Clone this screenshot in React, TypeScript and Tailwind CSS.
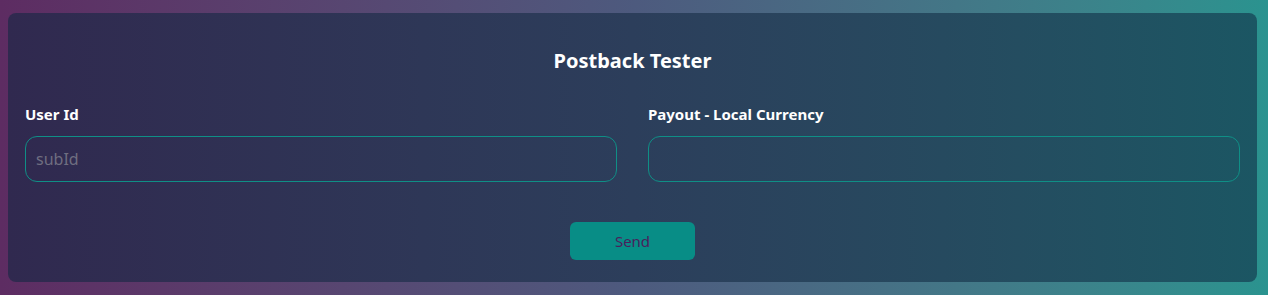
import React, { useState } from 'react';

export default function App() {
  const [userId, setUserId] = useState('');
  const [payout, setPayout] = useState('');

  return (
    <div
      className="min-h-[295px] w-full bg-gradient-to-r from-[#5d2c62] via-[#4d5a7e] to-[#2a938f] pt-[13px] pb-[14px] pl-2 pr-[11px]"
      style={{ fontFamily: '"Noto Sans", "Open Sans", sans-serif' }}
    >
      <div className="rounded-lg bg-gradient-to-r from-[#30294f] via-[#2c3e5b] to-[#1b5663] px-[17px] pt-[34px] pb-[22px]">
        <h1 className="text-center text-[20px] font-bold leading-7 text-white">Postback Tester</h1>

        <div className="mt-[29px] grid grid-cols-2 gap-[31px]">
          <div>
            <label className="block text-[15px] font-bold leading-5 text-white">User Id</label>
            <input
              type="text"
              placeholder="subId"
              value={userId}
              onChange={(e) => setUserId(e.target.value)}
              className="mt-[12px] h-[46px] w-full rounded-xl border border-[#0f8f86] bg-transparent px-[10px] text-[16px] text-white placeholder:text-[#6f6e80] outline-none"
            />
          </div>
          <div>
            <label className="block text-[15px] font-bold leading-5 text-white">Payout - Local Currency</label>
            <input
              type="text"
              value={payout}
              onChange={(e) => setPayout(e.target.value)}
              className="mt-[12px] h-[46px] w-full rounded-xl border border-[#0f8f86] bg-transparent px-[10px] text-[16px] text-white outline-none"
            />
          </div>
        </div>

        <div className="mt-[40px] flex justify-center">
          <button className="h-[38px] w-[125px] rounded-md bg-[#088d86] text-[15px] text-[#4a1f5c]">Send</button>
        </div>
      </div>
    </div>
  );
}
